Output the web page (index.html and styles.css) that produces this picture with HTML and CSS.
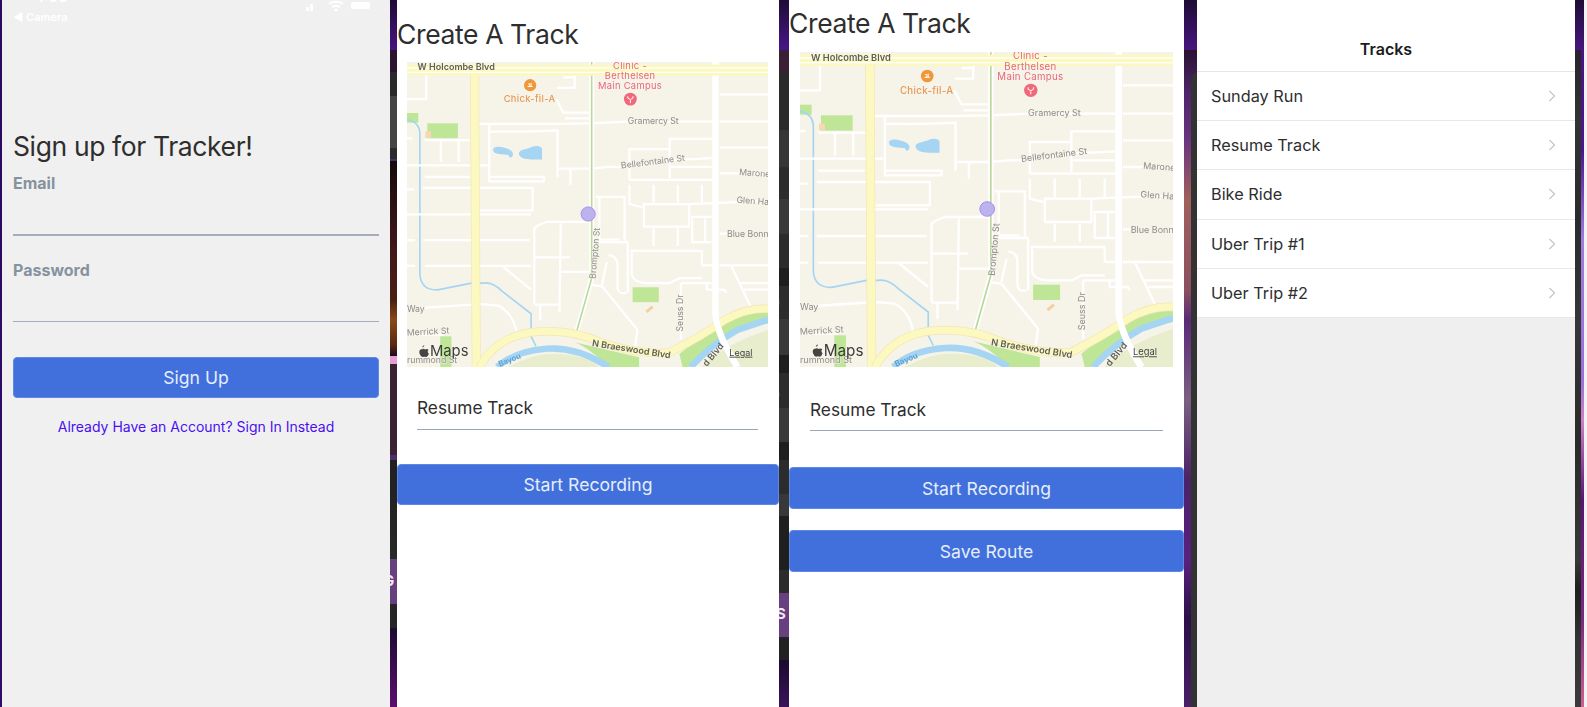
FILE: index.html
```html
<!DOCTYPE html>
<html lang="en">
<head>
    <meta charset="UTF-8">
    <meta name="viewport" content="width=device-width, initial-scale=1.0">
    <title>Tracker Screens</title>
    <link rel="stylesheet" href="styles.css">
</head>
<body>
    <!-- shared map drawing, used by both track screens -->
    <svg class="defs" aria-hidden="true">
        <symbol id="map" viewBox="15 20 1120 945" preserveAspectRatio="none">
            <rect x="15" y="20" width="1120" height="945" fill="#f6f3e9"/>
            <!-- parks -->
            <g fill="#bfe697">
                <rect x="78" y="210" width="95" height="46"/>
                <rect x="15" y="178" width="35" height="30"/>
                <rect x="715" y="718" width="81" height="46"/>
                <rect x="118" y="870" width="35" height="95"/>
                <path d="M535 888L735 935V965H640Q580 905 535 888Z"/>
                <path d="M860 925L985 825L1135 785V830L1030 850L890 965H870Z"/>
            </g>
            <path d="M330 965Q400 925 470 925Q570 925 610 965Z" fill="#e7edcd"/>
            <path d="M930 965Q990 900 1135 850V965Z" fill="#e7edcd"/>
            <rect x="72" y="235" width="18" height="20" fill="#f6d9b4"/>
            <rect x="755" y="782" width="25" height="9" fill="#f4cfa0" transform="rotate(-40 767 786)"/>
            <!-- water -->
            <g fill="none" stroke="#a5d5f2">
                <path stroke-width="5" d="M15 198Q55 205 55 245V680Q60 728 110 726L215 705H250Q280 700 310 730L400 800V870L415 900"/>
                <path stroke-width="20" d="M295 965Q350 915 450 908Q545 902 640 965"/>
                <path stroke-width="20" d="M895 965Q960 895 1040 850L1135 818"/>
            </g>
            <g fill="#a5d5f2">
                <path d="M282 292C282 282 300 280 318 286C335 290 347 298 343 310C340 318 332 318 330 308C315 306 282 308 282 292Z"/>
                <path d="M362 303C362 290 395 290 405 282C415 278 434 280 434 290V322H400C385 322 362 318 362 303Z"/>
            </g>
            <!-- small streets -->
            <g fill="none" stroke="#fff" stroke-width="7" stroke-linejoin="round">
                <path d="M15 135H75V20M535 60V100H480M500 68H540M478 135L500 177H580M505 195H580"/>
                <path d="M235 212H480L580 210L700 205H965M985 205H1135M985 120H1135M985 285H1135M985 365H1135M985 552H1010M985 650H1135"/>
                <path d="M270 215V390H440V376H272M270 235Q380 238 482 232V378M15 340H265M485 350H585L640 345H700L830 325L960 318"/>
                <path d="M522 350V400M70 376H210M15 415H38M65 410H405V480H240M15 492H400M120 262V330M175 262V330M70 262H215M15 257H32"/>
                <path d="M65 572H395M15 572H40M70 652H400M15 652H40M310 652L400 725M15 785L240 770L300 775Q345 800 355 860M15 865H130"/>
                <path d="M410 770V535Q420 525 450 515H580M410 625H520M492 520L488 795M410 772H490M428 775V820M488 670H580"/>
                <path d="M580 710L620 715L730 850L720 920M600 438H690V575M612 438V570H675M605 578H700V735M640 618Q668 620 668 650V720Q670 740 695 735M635 640L620 710"/>
                <path d="M705 385V290H830V258H965M705 385H965M830 258V380M835 345H960M705 400V460L745 470M780 400V455M855 400V455M930 400V455"/>
                <path d="M750 460H890V530H750ZM890 460L1135 450M780 535V590M855 535V590M895 500H960M900 505V578H960M940 505V575"/>
                <path d="M708 605H930V650M712 610V680Q720 705 760 705H830L860 690H930M930 650H965M865 705H960M865 705V880M945 705V725H1000L1005 735M1020 650L1080 775M1050 705H1135M1060 725H1135"/>
            </g>
            <!-- main roads -->
            <path d="M972 20V800Q975 860 1040 965" fill="none" stroke="#fff" stroke-width="20"/>
            <path d="M588 20V690L540 860" fill="none" stroke="#fff" stroke-width="16"/>
            <path d="M588 20V690L540 860" fill="none" stroke="#b9d89a" stroke-width="5"/>
            <rect x="15" y="28" width="1120" height="34" fill="#fbf8c0"/>
            <path d="M15 38H1135M15 52H1135" stroke="#fff" stroke-width="4"/>
            <path d="M225 60V150L230 965" fill="none" stroke="#f6e4b6" stroke-width="28"/>
            <path d="M225 60V150L230 965" fill="none" stroke="#fbf8c0" stroke-width="24"/>
            <path d="M240 965Q300 860 430 855Q530 850 620 890Q750 930 830 920Q930 870 1000 820Q1070 780 1135 785" fill="none" stroke="#f6e4b6" stroke-width="26"/>
            <path d="M240 965Q300 860 430 855Q530 850 620 890Q750 930 830 920Q930 870 1000 820Q1070 780 1135 785" fill="none" stroke="#fbf8c0" stroke-width="22"/>
            <path d="M972 800Q975 860 1040 965" fill="none" stroke="#fff" stroke-width="18"/>
            <!-- places -->
            <circle cx="397" cy="92" r="19" fill="#f0973a"/>
            <circle cx="708" cy="135" r="20" fill="#f0687a"/>
            <path d="M389 96h16M391 88h5v8M400 85v11" fill="none" stroke="#fff" stroke-width="3"/>
            <path d="M700 126v6q8 8 16 0v-6M708 138v9" fill="none" stroke="#fff" stroke-width="3"/>
            <circle cx="577" cy="491" r="22" fill="#bcb2ee" stroke="#a78cf2" stroke-width="3"/>
            <!-- labels -->
            <g class="map-label">
                <text x="700" y="213">Gramercy St</text>
                <text x="680" y="350" transform="rotate(-7 680 350)">Bellefontaine St</text>
                <text x="1045" y="370" transform="rotate(4 1045 370)">Marone</text>
                <text x="1037" y="456" transform="rotate(4 1037 456)">Glen Ha</text>
                <text x="1008" y="562">Blue Bonn</text>
                <text x="600" y="692" transform="rotate(-85 600 692)">Brompton St</text>
                <text x="871" y="855" transform="rotate(-90 871 855)">Seuss Dr</text>
                <text x="15" y="795">Way</text>
                <text x="15" y="868" transform="rotate(-3 15 868)">Merrick St</text>
                <text x="15" y="952">rummond St</text>
            </g>
            <text class="map-road" x="48" y="46">W Holcombe Blvd</text>
            <text class="map-road" x="588" y="900" transform="rotate(9 588 900)">N Braeswood Blvd</text>
            <text class="map-road" x="945" y="965" transform="rotate(-50 945 965)">d Blvd</text>
            <text class="map-water" x="303" y="964" transform="rotate(-22 303 964)">Bayou</text>
            <text class="map-food" x="315" y="145">Chick-fil-A</text>
            <text class="map-clinic" x="707" y="41">Clinic -</text>
            <text class="map-clinic" x="707" y="73">Berthelsen</text>
            <text class="map-clinic" x="707" y="105">Main Campus</text>
            <path d="M63 909q6-1 8 2q6-4 11 1q-6 5 1 12q-4 10-8 10q-3-1-6-1t-6 1q-5 0-9-10q-3-12 5-14q3-1 6 1q-3-1-2-2zM62 905q1-6 7-8q0 6-7 8z" fill="#444"/>
            <text class="map-logo" x="86" y="932">Maps</text>
            <text class="map-legal" x="1015" y="930">Legal</text>
        </symbol>
    </svg>

    <div class="gap gap-edge"></div>

    <section class="screen screen-signup">
        <div class="status-bar">
            <span class="status-time">1:00</span>
            <span class="status-back">◀ Camera</span>
            <svg class="status-icons" width="70" height="14" viewBox="0 0 70 14">
                <rect x="1" y="7" width="3" height="4" fill="#fff"/>
                <rect x="5" y="4" width="3" height="7" fill="#fff"/>
                <path d="M24 4a11 11 0 0 1 14 0M27 7a7 7 0 0 1 8 0" fill="none" stroke="#fff" stroke-width="2"/>
                <circle cx="31" cy="10" r="1.6" fill="#fff"/>
                <rect x="46" y="2" width="19" height="7" rx="2" fill="#fff"/>
            </svg>
        </div>
        <h1 class="title title-signup">Sign up for Tracker!</h1>
        <label class="field-label">Email</label>
        <div class="field-line line-email"></div>
        <label class="field-label label-password">Password</label>
        <div class="field-line line-password"></div>
        <button class="btn btn-signup">Sign Up</button>
        <a class="signin-link">Already Have an Account? Sign In Instead</a>
    </section>

    <div class="gap gap-one">
        <span class="scrap scrap-g">G</span>
    </div>

    <section class="screen screen-track first-track">
        <h1 class="title">Create A Track</h1>
        <svg class="map"><use href="#map"/></svg>
        <div class="track-name">Resume Track</div>
        <button class="btn">Start Recording</button>
    </section>

    <div class="gap gap-two">
        <span class="scrap scrap-paren">)</span>
        <span class="scrap scrap-zero">)</span>
        <span class="scrap scrap-s">S</span>
    </div>

    <section class="screen screen-track second-track">
        <h1 class="title">Create A Track</h1>
        <svg class="map"><use href="#map"/></svg>
        <div class="track-name">Resume Track</div>
        <button class="btn">Start Recording</button>
        <button class="btn btn-save">Save Route</button>
    </section>

    <div class="gap gap-three"><div class="phone-edge"></div></div>

    <section class="screen screen-list">
        <header class="list-header">Tracks</header>
        <div class="list-row"><span>Sunday Run</span><svg class="chevron" viewBox="0 0 8 12"><path d="M1.5 1l5 5-5 5"/></svg></div>
        <div class="list-row"><span>Resume Track</span><svg class="chevron" viewBox="0 0 8 12"><path d="M1.5 1l5 5-5 5"/></svg></div>
        <div class="list-row"><span>Bike Ride</span><svg class="chevron" viewBox="0 0 8 12"><path d="M1.5 1l5 5-5 5"/></svg></div>
        <div class="list-row"><span>Uber Trip #1</span><svg class="chevron" viewBox="0 0 8 12"><path d="M1.5 1l5 5-5 5"/></svg></div>
        <div class="list-row"><span>Uber Trip #2</span><svg class="chevron" viewBox="0 0 8 12"><path d="M1.5 1l5 5-5 5"/></svg></div>
    </section>

    <div class="gap gap-four">
        <div class="bands"></div>
        <div class="glow"></div>
        <div class="sliver"></div>
    </div>
</body>
</html>
```

FILE: styles.css
```css
html, body {
    margin: 0;
    height: 100%;
}
body {
    display: flex;
    width: 1587px;
    height: 707px;
    overflow: hidden;
    font-family: Inter, "Liberation Sans", sans-serif;
    color: #2e2e2e;
    background-color: #222;
}
.defs {
    position: absolute;
    width: 0;
    height: 0;
}

/* strips of desktop showing between the phone shots */
.gap {
    position: relative;
    flex: none;
    overflow: hidden;
}
.gap-edge {
    width: 2px;
    background: linear-gradient(#2a0a60, #2f0a6a);
}
.gap-one {
    width: 7px;
    background: linear-gradient(
        #1d0c35 0, #47167f 50px,
        #2a1230 50px, #2a1230 72px,
        #2a2a2a 72px, #2a2a2a 96px,
        #444 96px, #444 148px,
        #2a2a2a 148px, #2a2a2a 159px,
        #4a2a70 159px, #4a2a70 161px,
        #140a0a 161px, #42181c 250px, #4a2012 300px, #8a4a1a 320px, #5a2a10 345px, #1c0a20 356px,
        #e79bd0 356px, #e79bd0 364px,
        #3a2232 364px, #3a2232 455px,
        #4a3070 455px, #4a3070 460px,
        #202020 460px, #282828 559px,
        #66407f 559px, #66407f 604px,
        #262626 604px, #262626 628px,
        #1d0b30 628px, #5a0f6e 707px
    );
}
.gap-two {
    width: 10px;
    background: linear-gradient(
        #1d0c35 0, #4a1688 50px,
        #3a2035 50px, #3a2035 73px,
        #2a2a2a 73px, #2a2a2a 130px,
        #363636 130px, #363636 167px,
        #2c2c2c 167px, #2c2c2c 199px,
        #383838 199px, #383838 234px,
        #2c2c2c 234px, #2c2c2c 268px,
        #1e1e1e 268px, #1e1e1e 286px,
        #2c2c2c 286px, #2c2c2c 319px,
        #383838 319px, #383838 355px,
        #1e1e1e 355px, #1e1e1e 373px,
        #2c2c2c 373px, #2c2c2c 408px,
        #383838 408px, #383838 442px,
        #1e1e1e 442px, #1e1e1e 460px,
        #2c2c2c 460px, #2c2c2c 494px,
        #383838 494px, #383838 516px,
        #1f1f1f 516px, #1f1f1f 570px,
        #2c2c2c 570px, #2c2c2c 593px,
        #66407f 593px, #66407f 637px,
        #222 637px, #222 660px,
        #1a0a30 660px, #3a1458 707px
    );
}
.gap-three {
    width: 13px;
    background: linear-gradient(
        #1d0c35 0, #47167f 50px,
        #2a1230 50px, #4a2468 90px, #6a3480 140px, #a0605c 200px, #8a5060 290px,
        #5a2a78 320px, #7a6080 400px, #4a2268 480px, #5a2080 560px, #2a1048 620px, #4a2068 707px
    );
}
.phone-edge {
    margin: 73px 0 0 7px;
    height: 634px;
    background-color: #333;
    border-radius: 6px 0 0 0;
}
.gap-four {
    display: flex;
    width: 12px;
}
.bands {
    width: 6px;
    background: linear-gradient(
        #1d0c35 0, #47167f 50px,
        #2a2030 50px, #2a2a2a 73px,
        #333 120px, #2a2a2a 220px, #363636 320px, #2a2a2a 440px, #383838 560px, #1e1e1e 590px, #333 640px, #3a3a3a 707px
    );
}
.glow {
    width: 3px;
    background: linear-gradient(
        #1d0c35 0, #47167f 50px,
        #4a1690 150px, #a07ce0 240px, #9a70d8 380px, #d080c8 420px, #5a1478 500px, #7a2a80 620px, #d06090 707px
    );
}
.sliver {
    width: 3px;
    background-color: #f2f2f4;
}
.scrap {
    position: absolute;
    font-size: 15px;
    font-weight: 700;
    color: #f0e6f6;
    line-height: 18px;
}
.scrap-g {
    top: 572px;
    left: -7px;
}
.scrap-s {
    top: 605px;
    left: -3px;
}
.scrap-paren {
    top: 293px;
    left: -4px;
    font-weight: 400;
}
.scrap-zero {
    top: 385px;
    left: -4px;
    font-weight: 400;
}

/* phone screens */
.screen {
    position: relative;
    flex: none;
    display: flex;
    flex-direction: column;
    box-sizing: border-box;
    background-color: white;
}
.title {
    margin: 0;
    font-size: 26.5px;
    font-weight: 400;
    letter-spacing: -0.38px;
    line-height: 34px;
}
.btn {
    display: block;
    height: 41px;
    padding: 0;
    border: 1px solid #5d88e6;
    border-radius: 4px;
    background-color: #4170dc;
    color: #e6edfb;
    font-family: inherit;
    font-size: 17.6px;
}

/* sign up */
.screen-signup {
    width: 388px;
    padding: 129px 11px 0;
    background-color: #f0f0f0;
}
.status-bar {
    position: absolute;
    top: 0;
    left: 0;
    right: 0;
    height: 30px;
    color: white;
}
.status-time {
    position: absolute;
    top: -13px;
    left: 35px;
    font-size: 15px;
    font-weight: 600;
}
.status-back {
    position: absolute;
    top: 10px;
    left: 11px;
    font-size: 11px;
    font-weight: 600;
}
.status-icons {
    position: absolute;
    top: 0;
    left: 303px;
}
.field-label {
    margin-top: 10px;
    font-size: 16px;
    font-weight: 700;
    line-height: 20px;
    color: #86939e;
}
.label-password {
    margin-top: 24px;
}
.field-line {
    height: 1.5px;
    margin-top: 41px;
    background-color: #a5adbb;
}
.line-password {
    margin-top: 41px;
}
.btn-signup {
    width: 100%;
    margin-top: 35px;
}
.signin-link {
    margin-top: 20px;
    text-align: center;
    font-size: 14px;
    line-height: 18px;
    color: #4a10f2;
}

/* create a track */
.screen-track .btn {
    width: 100%;
}
.first-track {
    width: 382px;
    padding-top: 17px;
}
.second-track {
    width: 395px;
    padding-top: 6px;
}
.map {
    display: block;
    filter: blur(0.4px);
}
.first-track .map {
    width: 361px;
    height: 305px;
    margin: 11px 0 0 10px;
}
.second-track .map {
    width: 373px;
    height: 315px;
    margin: 12px 0 0 11px;
}
.track-name {
    height: 44px;
    margin-top: 18px;
    font-size: 17.3px;
    line-height: 46px;
    border-bottom: 1px solid #9aa5b8;
}
.first-track .track-name {
    margin-left: 20px;
    margin-right: 21px;
}
.second-track .track-name {
    margin-left: 21px;
    margin-right: 21px;
    margin-top: 19px;
    line-height: 47px;
}
.first-track .btn {
    margin-top: 34px;
}
.second-track .btn {
    height: 42px;
    margin-top: 36px;
}
.second-track .btn-save {
    margin-top: 21px;
}

/* map text */
.map-label {
    font-size: 27px;
    fill: #8d8d8a;
    stroke: #f6f3e9;
    stroke-width: 3px;
    paint-order: stroke;
}
.map-road {
    font-size: 28px;
    font-weight: 600;
    fill: #5e5e5a;
}
.map-water {
    font-size: 24px;
    font-weight: 600;
    fill: #5a9fd0;
}
.map-food {
    font-size: 29px;
    font-weight: 500;
    letter-spacing: 1px;
    fill: #e69a55;
}
.map-clinic {
    font-size: 29px;
    font-weight: 400;
    letter-spacing: 1px;
    text-anchor: middle;
    fill: #e8667a;
}
.map-logo {
    font-size: 46px;
    fill: #3c3c3c;
}
.map-legal {
    font-size: 28px;
    text-decoration: underline;
    fill: #444;
}

/* track list */
.screen-list {
    width: 378px;
    background-color: #efefef;
}
.list-header {
    flex: none;
    height: 72px;
    padding-top: 39px;
    box-sizing: border-box;
    text-align: center;
    font-size: 16px;
    font-weight: 600;
    line-height: 21px;
    color: #1c1c1c;
    background-color: white;
    border-bottom: 1px solid #e6e6e6;
}
.list-row {
    flex: none;
    display: flex;
    justify-content: space-between;
    align-items: center;
    box-sizing: border-box;
    height: 49.2px;
    padding: 0 19px 0 14px;
    font-size: 16.3px;
    background-color: white;
    border-bottom: 1.5px solid #e8e8e8;
}
.chevron {
    width: 8px;
    height: 12px;
    fill: none;
    stroke: #c7c7cc;
    stroke-width: 1.3;
}
```
